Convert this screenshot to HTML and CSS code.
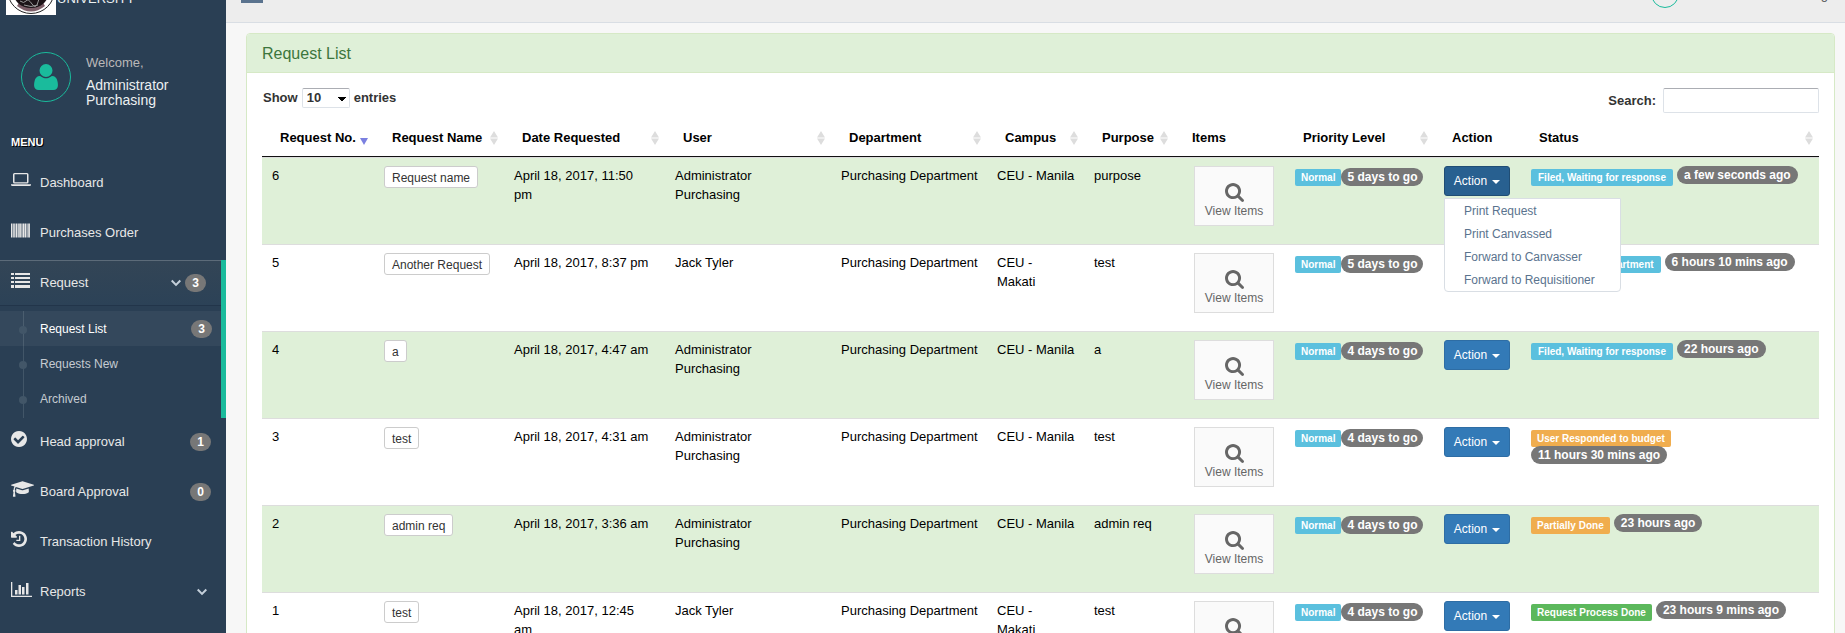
FILE: index.html
```html
<!DOCTYPE html>
<html lang="en">
<head>
<meta charset="utf-8">
<title>Request List</title>
<link rel="stylesheet" href="styles.css">
</head>
<body>
<svg class="defs" aria-hidden="true">
  <symbol id="i-user" viewBox="0 0 1408 1536"><path transform="matrix(1 0 0 -1 0 1408)" d="M1408 131q0 -120 -73 -189.5t-194 -69.5h-874q-121 0 -194 69.5t-73 189.5q0 53 3.5 103.5t14 109t26.5 108.5t43 97.5t62 81t85.5 53.5t111.5 20q9 0 42 -21.5t74.5 -48t108 -48t133.5 -21.5t133.5 21.5t108 48t74.5 48t42 21.5q61 0 111.5 -20t85.5 -53.5t62 -81t43 -97.5t26.5 -108.5t14 -109t3.5 -103.5zM1088 1024q0 -159 -112.5 -271.5t-271.5 -112.5t-271.5 112.5t-112.5 271.5t112.5 271.5t271.5 112.5t271.5 -112.5t112.5 -271.5z"/></symbol>
  <symbol id="i-search" viewBox="0 0 1664 1664"><path transform="matrix(1 0 0 -1 0 1408)" d="M1152 704q0 185 -131.5 316.5t-316.5 131.5t-316.5 -131.5t-131.5 -316.5t131.5 -316.5t316.5 -131.5t316.5 131.5t131.5 316.5zM1664 -128q0 -52 -38 -90t-90 -38q-54 0 -90 38l-343 342q-179 -124 -399 -124q-143 0 -273.5 55.5t-225 150t-150 225t-55.5 273.5t55.5 273.5t150 225t225 150t273.5 55.5t273.5 -55.5t225 -150t150 -225t55.5 -273.5q0 -220 -124 -399l343 -343q37 -37 37 -90z"/></symbol>
  <symbol id="i-check" viewBox="0 0 1536 1536"><path transform="matrix(1 0 0 -1 0 1408)" d="M1284 802q0 28 -18 46l-91 90q-19 19 -45 19t-45 -19l-408 -407l-226 226q-19 19 -45 19t-45 -19l-91 -90q-18 -18 -18 -46q0 -27 18 -45l362 -362q19 -19 45 -19q27 0 46 19l543 543q18 18 18 45zM1536 640q0 -209 -103 -385.5t-279.5 -279.5t-385.5 -103t-385.5 103t-279.5 279.5t-103 385.5t103 385.5t279.5 279.5t385.5 103t385.5 -103t279.5 -279.5t103 -385.5z"/></symbol>
  <symbol id="i-history" viewBox="0 0 1536 1536"><path transform="matrix(1 0 0 -1 0 1408)" d="M1536 640q0 -156 -61 -298t-164 -245t-245 -164t-298 -61q-172 0 -327 72.5t-264 204.5q-7 10 -6.5 22.5t8.5 20.5l137 138q10 9 25 9q16 -2 23 -12q73 -95 179 -147t225 -52q104 0 198.5 40.5t163.5 109.5t109.5 163.5t40.5 198.5t-40.5 198.5t-109.5 163.5t-163.5 109.5t-198.5 40.5q-98 0 -188 -35.5t-160 -101.5l137 -138q31 -30 14 -69q-17 -40 -59 -40h-448q-26 0 -45 19t-19 45v448q0 42 40 59q39 17 69 -14l130 -129q107 101 244.5 156.5t284.5 55.5q156 0 298 -61t245 -164t164 -245t61 -298zM896 928v-448q0 -14 -9 -23t-23 -9h-320q-14 0 -23 9t-9 23v64q0 14 9 23t23 9h224v352q0 14 9 23t23 9h64q14 0 23 -9t9 -23z"/></symbol>
  <symbol id="i-cap" viewBox="0 0 2304 1536"><path transform="matrix(1 0 0 -1 0 1408)" d="M1774 700l18 -316q4 -69 -82 -128t-235 -93.5t-323 -34.5t-323 34.5t-235 93.5t-82 128l18 316l574 -181q22 -7 48 -7t48 7zM2304 1024q0 -23 -22 -31l-1120 -352q-4 -1 -10 -1t-10 1l-652 206q-43 -34 -71 -111.5t-34 -178.5q63 -36 63 -109q0 -69 -58 -107l58 -433q2 -14 -8 -25q-9 -11 -24 -11h-192q-15 0 -24 11q-10 11 -8 25l58 433q-58 38 -58 107q0 73 65 111q11 207 98 330l-333 104q-22 8 -22 31t22 31l1120 352q4 1 10 1t10 -1l1120 -352q22 -8 22 -31z"/></symbol>
  <symbol id="i-laptop" viewBox="0 0 20 14"><path fill-rule="evenodd" d="M3.5 0h12.500q1.500 0 1.500 1.500v7.500q0 1.500 -1.500 1.500h-12.500q-1.500 0 -1.500 -1.500v-7.500q0 -1.500 1.500 -1.500zM3.500 1.300v8h12.500v-8zM0 11.300h20v.7q0 1 -1.500 1h-17q-1.500 0 -1.500 -1z"/></symbol>
  <symbol id="i-barcode" viewBox="0 0 19 14"><path d="M0 0h1.300v14h-1.300zM1.800 0h1v14h-1zM3.200 0h1.300v14h-1.300zM5 0h1.500v14h-1.500zM7 0h.8v14h-.8zM8.200 0h1.700v14h-1.700zM10.400 0h.8v14h-.8zM11.600 0h1.600v14h-1.600zM13.600 0h1.500v14h-1.500zM15.600 0h1v14h-1zM17 0h.8v14h-.8zM18.100 0h.9v14h-.9z"/></symbol>
  <symbol id="i-list" viewBox="0 0 19 15"><path d="M0 0h3v2h-3zM4 0h15v2h-15zM0 4h3v2h-3zM4 4h15v2h-15zM0 8h3v2h-3zM4 8h15v2h-15zM0 12h3v3h-3zM4 12h15v3h-15z"/></symbol>
  <symbol id="i-chart" viewBox="0 0 21 15"><path d="M0 0h1.300v13.700h19.700v1.300h-21zM4 8h2.500v4.500h-2.500zM7.500 3h2.500v9.500h-2.500zM11 5h2.500v7.500h-2.500zM15 1h2.500v11.500h-2.500z"/></symbol>
  <symbol id="i-chevron" viewBox="0 0 10 8"><path d="M0 2.200L1.400 .8L5 4.400L8.600 .8L10 2.200L5 7.200z"/></symbol>
  <symbol id="i-sort" viewBox="0 0 8 14"><path d="M4 0L8 6.500H0zM0 7.500H8L4 14z"/></symbol>
  <symbol id="i-desc" viewBox="0 0 8 14"><path d="M0 7H8L4 14z"/></symbol>
</svg>
<div class="layout">
  <aside class="sidebar">
    <a class="brand" href="#">
      <svg class="seal" viewBox="0 0 50 50" aria-hidden="true"><rect width="50" height="50" fill="#fff"/><circle cx="25" cy="25" r="23.500" fill="#fff" stroke="#222" stroke-width="1"/><path d="M11 41Q25 52 39 41L36 36H14z" fill="#7d5f69"/><ellipse cx="25" cy="29" rx="17" ry="14" fill="#1c1418"/><path d="M14 36q4 3 6 0t6 3t6-2t5-2M18 40q7 3 14 0" fill="none" stroke="#999" stroke-width="1"/></svg>
      <span>UNIVERSITY</span>
    </a>
    <div class="profile">
      <span class="avatar"><svg class="avatar-icon"><use href="#i-user"/></svg></span>
      <div class="who"><span class="welcome">Welcome,</span><h2>Administrator Purchasing</h2></div>
    </div>
    <h3 class="menu-title">MENU</h3>
    <ul class="menu">
      <li><a href="#"><svg class="laptop"><use href="#i-laptop"/></svg><span>Dashboard</span></a></li>
      <li><a href="#"><svg class="barcode"><use href="#i-barcode"/></svg><span>Purchases Order</span></a></li>
      <li class="active"><a class="open" href="#"><svg class="list"><use href="#i-list"/></svg><span>Request</span><svg class="chevron"><use href="#i-chevron"/></svg><b class="badge">3</b></a>
        <ul class="submenu">
          <li class="current"><a href="#"><span>Request List</span><b class="badge">3</b></a></li>
          <li><a href="#">Requests New</a></li>
          <li><a href="#">Archived</a></li>
        </ul>
      </li>
      <li><a href="#"><svg class="round"><use href="#i-check"/></svg><span>Head approval</span><b class="badge">1</b></a></li>
      <li><a href="#"><svg class="cap"><use href="#i-cap"/></svg><span>Board Approval</span><b class="badge">0</b></a></li>
      <li><a href="#"><svg class="round"><use href="#i-history"/></svg><span>Transaction History</span></a></li>
      <li><a class="more" href="#"><svg class="chart"><use href="#i-chart"/></svg><span>Reports</span><svg class="chevron"><use href="#i-chevron"/></svg></a></li>
    </ul>
  </aside>
  <div class="content">
    <header class="topbar">
      <button class="toggle" type="button" aria-label="Toggle menu"><i></i><i></i><i></i></button>
      <a class="account" href="#"><span class="mini-avatar"></span><span class="account-name">Administrator Purchasing</span></a>
    </header>
    <main class="main">
      <section class="panel">
        <h1 class="panel-title">Request List</h1>
        <div class="panel-body">
          <div class="controls">
            <label class="length">Show <select><option>10</option><option>25</option></select> entries</label>
            <label class="filter">Search: <input type="search"></label>
          </div>
          <table class="requests">
            <colgroup><col class="c-no"><col class="c-name"><col class="c-date"><col class="c-user"><col class="c-dept"><col class="c-campus"><col class="c-purpose"><col class="c-items"><col class="c-priority"><col class="c-action"><col class="c-status"></colgroup>
            <thead><tr>
              <th><div>Request No.<svg class="sort sorted"><use href="#i-desc"/></svg></div></th>
              <th><div>Request Name<svg class="sort"><use href="#i-sort"/></svg></div></th>
              <th><div>Date Requested<svg class="sort"><use href="#i-sort"/></svg></div></th>
              <th><div>User<svg class="sort"><use href="#i-sort"/></svg></div></th>
              <th><div>Department<svg class="sort"><use href="#i-sort"/></svg></div></th>
              <th><div>Campus<svg class="sort"><use href="#i-sort"/></svg></div></th>
              <th><div>Purpose<svg class="sort"><use href="#i-sort"/></svg></div></th>
              <th>Items</th>
              <th><div>Priority Level<svg class="sort"><use href="#i-sort"/></svg></div></th>
              <th>Action</th>
              <th><div>Status<svg class="sort"><use href="#i-sort"/></svg></div></th>
            </tr></thead>
            <tbody>
              <tr><td>6</td><td><button class="name" type="button">Request name</button></td><td>April 18, 2017, 11:50<br>pm</td><td>Administrator<br>Purchasing</td><td>Purchasing Department</td><td>CEU - Manila</td><td>purpose</td>
                <td><a class="view" href="#"><svg><use href="#i-search"/></svg>View Items</a></td>
                <td><div class="priority"><span class="label info">Normal</span><b class="badge">5 days to go</b></div></td>
                <td class="action-cell"><button class="action pressed" type="button" aria-expanded="true">Action <i class="caret"></i></button>
                  <ul class="dropdown"><li><a href="#">Print Request</a></li><li><a href="#">Print Canvassed</a></li><li><a href="#">Forward to Canvasser</a></li><li><a href="#">Forward to Requisitioner</a></li></ul></td>
                <td><div class="status"><span class="label info">Filed, Waiting for response</span><b class="badge">a few seconds ago</b></div></td></tr>
              <tr><td>5</td><td><button class="name" type="button">Another Request</button></td><td>April 18, 2017, 8:37 pm</td><td>Jack Tyler</td><td>Purchasing Department</td><td>CEU -<br>Makati</td><td>test</td>
                <td><a class="view" href="#"><svg><use href="#i-search"/></svg>View Items</a></td>
                <td><div class="priority"><span class="label info">Normal</span><b class="badge">5 days to go</b></div></td>
                <td><button class="action" type="button">Action <i class="caret"></i></button></td>
                <td><div class="status"><span class="label info">Received by department</span><b class="badge">6 hours 10 mins ago</b></div></td></tr>
              <tr><td>4</td><td><button class="name" type="button">a</button></td><td>April 18, 2017, 4:47 am</td><td>Administrator<br>Purchasing</td><td>Purchasing Department</td><td>CEU - Manila</td><td>a</td>
                <td><a class="view" href="#"><svg><use href="#i-search"/></svg>View Items</a></td>
                <td><div class="priority"><span class="label info">Normal</span><b class="badge">4 days to go</b></div></td>
                <td><button class="action" type="button">Action <i class="caret"></i></button></td>
                <td><div class="status"><span class="label info">Filed, Waiting for response</span><b class="badge">22 hours ago</b></div></td></tr>
              <tr><td>3</td><td><button class="name" type="button">test</button></td><td>April 18, 2017, 4:31 am</td><td>Administrator<br>Purchasing</td><td>Purchasing Department</td><td>CEU - Manila</td><td>test</td>
                <td><a class="view" href="#"><svg><use href="#i-search"/></svg>View Items</a></td>
                <td><div class="priority"><span class="label info">Normal</span><b class="badge">4 days to go</b></div></td>
                <td><button class="action" type="button">Action <i class="caret"></i></button></td>
                <td><div class="status stacked"><span class="label warning">User Responded to budget</span><b class="badge">11 hours 30 mins ago</b></div></td></tr>
              <tr><td>2</td><td><button class="name" type="button">admin req</button></td><td>April 18, 2017, 3:36 am</td><td>Administrator<br>Purchasing</td><td>Purchasing Department</td><td>CEU - Manila</td><td>admin req</td>
                <td><a class="view" href="#"><svg><use href="#i-search"/></svg>View Items</a></td>
                <td><div class="priority"><span class="label info">Normal</span><b class="badge">4 days to go</b></div></td>
                <td><button class="action" type="button">Action <i class="caret"></i></button></td>
                <td><div class="status"><span class="label warning">Partially Done</span><b class="badge">23 hours ago</b></div></td></tr>
              <tr><td>1</td><td><button class="name" type="button">test</button></td><td>April 18, 2017, 12:45<br>am</td><td>Jack Tyler</td><td>Purchasing Department</td><td>CEU -<br>Makati</td><td>test</td>
                <td><a class="view" href="#"><svg><use href="#i-search"/></svg>View Items</a></td>
                <td><div class="priority"><span class="label info">Normal</span><b class="badge">4 days to go</b></div></td>
                <td><button class="action" type="button">Action <i class="caret"></i></button></td>
                <td><div class="status"><span class="label success">Request Process Done</span><b class="badge">23 hours 9 mins ago</b></div></td></tr>
            </tbody>
          </table>
        </div>
      </section>
    </main>
  </div>
</div>
</body>
</html>
```
FILE: styles.css
```css
* { box-sizing: border-box; }
body { margin: 0; font: 13px/18px "Liberation Sans", Arial, sans-serif; color: #000; background: #f7f7f7; }
ul { list-style: none; margin: 0; padding: 0; }
a { color: inherit; text-decoration: none; }
button, input, select { font: inherit; }
svg { fill: currentColor; flex: none; }
.defs { position: absolute; width: 0; height: 0; }
.layout { display: flex; height: 100vh; overflow: hidden; }

.sidebar { flex: none; width: 226px; background: #2a3f54; color: #e7e7e7; }
.brand { display: flex; align-items: flex-end; gap: 1px; height: 15px; padding-left: 6px; overflow: hidden; color: #ecf0f1; }
.seal { width: 50px; height: 50px; }
.brand span { padding-bottom: 7px; }
.profile { display: flex; gap: 15px; padding: 37px 20px 0 21px; }
.avatar { display: flex; align-items: center; justify-content: center; flex: none; width: 50px; height: 50px; border: 1px solid #1abb9c; border-radius: 50%; color: #1abb9c; }
.avatar-icon { width: 24px; height: 26px; }
.who { padding-top: 2px; }
.welcome { color: #bab8b8; }
.who h2 { margin: 6px 0 0; font-size: 14px; line-height: 15px; font-weight: 400; color: #ecf0f1; }
.menu-title { margin: 26px 0 10px 11px; font-size: 11px; line-height: 16px; color: #fff; text-shadow: 1px 1px #000; }
.menu > li { margin-bottom: 5px; }
.menu > li > a { display: flex; align-items: center; height: 45px; padding: 0 15px 0 11px; }
.menu > li > a > span { flex: 1; }
.menu > li > a > svg:first-child { margin-bottom: 5px; }
.laptop { width: 20px; height: 14px; margin-right: 9px; }
.barcode, .list { width: 19px; height: 15px; margin-right: 10px; }
.round { width: 16px; height: 16px; margin-right: 13px; }
.cap { width: 23px; height: 16px; margin-right: 6px; }
.chart { width: 21px; height: 15px; margin-right: 8px; }
.chevron { width: 10px; height: 8px; color: #c4cfda; }
.menu .badge { flex: none; width: 21px; padding: 0; text-align: center; }
.menu .active { margin-bottom: 1px; padding-bottom: 2px; border-right: 5px solid #1abb9c; }
.menu > li > .open { height: 46px; border-top: 1px solid #5c6b79; border-bottom: 1px solid #22354a; background: linear-gradient(#334556, #2c4257); }
.open .badge { margin-left: 4px; }
.more .chevron { margin-right: 4px; }
.submenu { position: relative; margin-top: 5px; font-size: 12px; color: #c5cbd1; }
.submenu::before { content: ""; position: absolute; left: 23px; top: 0; bottom: -2px; width: 1px; background: #425668; }
.submenu li { position: relative; }
.submenu li::before { content: ""; position: absolute; left: 19px; top: 15px; width: 8px; height: 8px; border-radius: 50%; background: #425668; }
.submenu a { display: flex; align-items: center; justify-content: space-between; height: 35px; padding: 0 9px 0 40px; }
.submenu .current { background: rgba(255, 255, 255, .05); color: #fff; }

.content { flex: 1; min-width: 0; }
.topbar { display: flex; align-items: flex-end; justify-content: space-between; height: 23px; padding: 0 17px 0 15px; overflow: hidden; background: #ededed; border-bottom: 1px solid #d9dee4; color: #515356; }
.toggle { display: grid; gap: 4px; width: 22px; margin: 0 0 19px; padding: 0; border: 0; background: none; }
.toggle i { height: 4px; background: #5a738e; }
.account { display: flex; align-items: flex-end; gap: 4px; }
.mini-avatar { width: 28px; height: 28px; margin-bottom: 14px; border: 1px solid #1abb9c; border-radius: 50%; }
.account-name { padding-bottom: 18px; }
.main { padding: 10px 10px 0 20px; }
.panel { border: 1px solid #d6e9c6; border-radius: 4px; background: #fff; }
.panel-title { margin: 0; padding: 11px 15px 9px; font-size: 16px; line-height: 18px; font-weight: 400; color: #3c763d; background: #dff0d8; border-bottom: 1px solid #d6e9c6; border-radius: 3px 3px 0 0; }
.panel-body { padding: 15px; }
.controls { display: flex; justify-content: space-between; align-items: flex-start; margin-bottom: 5px; font-weight: 700; color: #333; }
.length { display: flex; align-items: center; gap: 4px; padding-left: 1px; }
.length select { appearance: none; width: 48px; height: 20px; padding: 0 0 0 4px; border: 1px solid #dde2e8; border-top-color: #abadb3; border-radius: 2px; color: #333; background: linear-gradient(45deg, transparent 50%, #000 50%) 35px 8px / 4px 4px no-repeat, linear-gradient(-45deg, transparent 50%, #000 50%) 39px 8px / 4px 4px no-repeat, #fff; }
.filter { display: flex; align-items: center; gap: 7px; }
.filter input { width: 156px; height: 25px; border: 1px solid #dde2e8; border-top-color: #abadb3; border-radius: 2px; background: #fff; }

.requests { width: 100%; table-layout: fixed; border-collapse: separate; border-spacing: 0; }
.c-no { width: 112px; } .c-name { width: 130px; } .c-date { width: 161px; } .c-user { width: 166px; }
.c-dept { width: 156px; } .c-campus { width: 97px; } .c-purpose { width: 90px; } .c-items { width: 111px; }
.c-priority { width: 149px; } .c-action { width: 87px; } .c-status { width: 298px; }
.requests th { padding: 11px 6px 9px 18px; text-align: left; white-space: nowrap; border-bottom: 1px solid #111; }
.requests th div { display: flex; align-items: center; justify-content: space-between; }
.sort { width: 8px; height: 14px; color: #ddd; }
.sorted { color: #7b80e0; }
.requests td { padding: 8px 8px 8px 10px; vertical-align: top; border-top: 1px solid #ddd; line-height: 19px; }
.requests tbody tr:nth-child(odd) { background: #dff0d8; }
.name { display: block; height: 22px; padding: 1px 7px 0; font-size: 12px; line-height: 18px; color: #333; background: #fff; border: 1px solid #ccc; border-radius: 3px; }
.view { display: flex; flex-direction: column; align-items: center; width: 80px; height: 60px; margin: 0 0 10px 10px; padding-top: 16px; font-size: 12px; line-height: 18px; color: #666; background: #fafafa; border: 1px solid #ddd; }
.view svg { width: 19px; height: 19px; }
.badge { display: inline-block; height: 18px; padding: 0 7px; border-radius: 9px; font-size: 12px; line-height: 18px; font-weight: 700; color: #fff; background: #777; white-space: nowrap; }
.label { height: 17px; padding: 0 6px; border-radius: 2px; font-size: 10px; line-height: 17px; font-weight: 700; color: #fff; white-space: nowrap; }
.info { background: #5bc0de; } .warning { background: #f0ad4e; } .success { background: #5cb85c; }
.priority { display: flex; align-items: center; padding-top: 2px; }
.priority .badge { padding: 0 6px; }
.status { display: flex; gap: 4px; align-items: flex-start; }
.status .label { margin-top: 3px; }
.status .info { padding: 0 7px; }
.stacked { flex-direction: column; gap: 0; }
.stacked .badge { margin-top: -1px; }
.action-cell { position: relative; }
.action { display: flex; align-items: center; justify-content: center; gap: 5px; width: 66px; height: 30px; padding: 1px 0 0; font-size: 12px; color: #fff; background: #337ab7; border: 1px solid #2e6da4; border-radius: 3px; }
.pressed { background: #286090; border-color: #204d74; }
.caret { border: 4px solid transparent; border-top-color: #fff; border-bottom: 0; }
.dropdown { position: absolute; z-index: 2; left: 10px; top: 40px; width: 177px; background: #fff; border: 1px solid #d9dee4; border-radius: 0 0 4px 4px; font-size: 12px; color: #5a738e; }
.dropdown a { display: block; padding: 3px 19px 2px; line-height: 18px; }
```
